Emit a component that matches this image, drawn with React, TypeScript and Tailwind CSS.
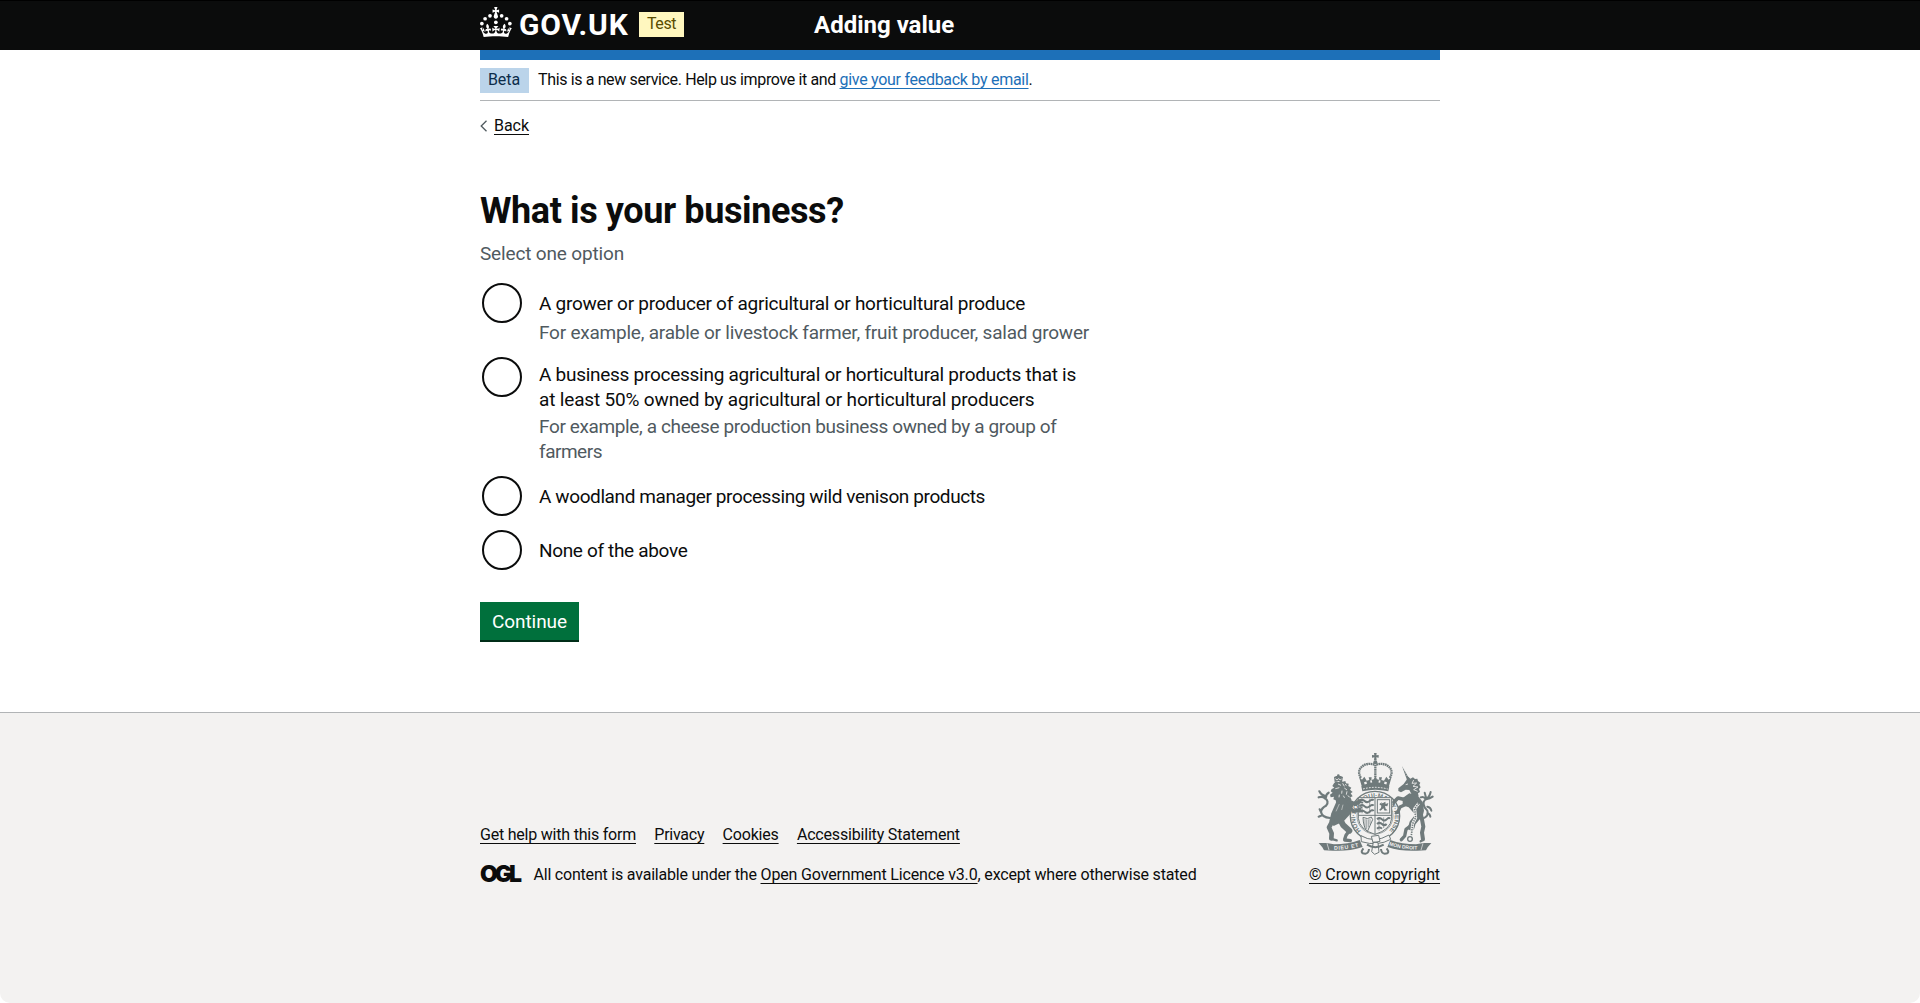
import React from "react";

const link = "underline decoration-1 underline-offset-[3px]";

function CrownMark() {
  return (
    <svg className="h-[30px] w-8 shrink-0" viewBox="0 0 64 60" fill="#fff" aria-hidden="true">
      <circle cx="20" cy="17.6" r="3.7" />
      <circle cx="10.2" cy="23.5" r="3.7" />
      <circle cx="3.7" cy="33.2" r="3.7" />
      <circle cx="31.7" cy="30.6" r="3.7" />
      <circle cx="43.3" cy="17.6" r="3.7" />
      <circle cx="53.2" cy="23.5" r="3.7" />
      <circle cx="59.7" cy="33.2" r="3.7" />
      <path d="M33.1,9.8c.2-.1.3-.3.5-.5l4.6,2.4v-6.8l-4.6,1.5c-.1-.2-.3-.3-.5-.5l1.9-5.9h-6.7l1.9,5.9c-.2.1-.3.3-.5.5l-4.6-1.5v6.8l4.6-2.4c.1.2.3.3.5.5l-2.6,8c-.9,2.8,1.2,5.7,4.1,5.7h0c3,0,5.1-2.9,4.1-5.7l-2.6-8ZM37,37.9s-3.4,3.8-4.1,6.1c2.2,0,4.2-.5,6.4-2.8l-.7,8.5c-2-2.8-4.4-4.1-5.7-3.8.1,3.1.5,6.7,5.8,7.2,3.7.3,6.7-1.5,7-3.8.4-2.6-2-4.3-3.7-1.6-1.4-4.5,2.4-6.1,4.9-3.2-1.9-4.5-1.8-7.7,2.4-10.9,3,4,2.6,7.3-1.2,11.1,2.4-1.3,6.2,0,4,4.6-1.2-2.8-3.7-2.2-4.2.2-.3,1.7.7,3.7,3,4.2,1.9.3,4.7-.9,7-5.9-1.3,0-2.4.7-3.9,1.7l2.4-8c.6,2.3,1.4,3.7,2.2,4.5.6-1.6.5-2.8,0-5.3l5,1.8c-2.6,3.6-5.2,8.7-7.3,17.5-7.4-1.1-15.7-1.7-24.5-1.7h0c-8.8,0-17.1.6-24.5,1.7-2.1-8.9-4.7-13.9-7.3-17.5l5-1.8c-.5,2.5-.6,3.7,0,5.3.8-.8,1.6-2.3,2.2-4.5l2.4,8c-1.5-1-2.6-1.7-3.9-1.7,2.3,5,5.2,6.2,7,5.9,2.3-.4,3.3-2.4,3-4.2-.5-2.4-3-3.1-4.2-.2-2.2-4.6,1.6-6,4-4.6-3.7-3.7-4.2-7.1-1.2-11.1,4.2,3.2,4.3,6.4,2.4,10.9,2.5-2.8,6.3-1.3,4.9,3.2-1.8-2.7-4.1-1-3.7,1.6.3,2.3,3.3,4.1,7,3.8,5.4-.5,5.7-4.2,5.8-7.2-1.3-.2-3.7,1-5.7,3.8l-.7-8.5c2.2,2.3,4.2,2.7,6.4,2.8-.7-2.3-4.1-6.1-4.1-6.1h10.6Z" />
    </svg>
  );
}

function RoyalArms() {
  const ink = "#6f7a7b";
  const paper = "#f3f2f1";
  return (
    <svg className="h-[112px] w-[126px]" viewBox="0 0 378 336" fill={ink} aria-hidden="true">
      {/* imperial crown */}
      <path d="M186 15h8l-1 7 7-1v8l-7-1 1 9h-8l1-9-7 1v-8l7 1z" />
      <circle cx="190" cy="43" r="6" />
      <path d="M190 50v46M187 50C160 40 128 62 147 90M193 50C220 40 252 62 233 90" fill="none" stroke={ink} strokeWidth="7" strokeDasharray="5 1.5" />
      <path d="M141 86l9 9 7-9 7 12 8-2-2-8h9l-1 8 9-3 3-10 3 10 9 3-1-8h9l-2 8 8 2 7-12 7 9 9-9-9 32q-40-10-80 0z" />
      <path d="M157 106l7-2M175 101l5-1M200 100l5 1M217 104l7 2" stroke={paper} strokeWidth="7" />
      <path d="M148 115q42-12 84 0l-3 15q-39-10-78 0z" />
      <path d="M153 123q37-10 74 0" stroke={paper} strokeWidth="3" strokeDasharray="5 4" fill="none" />
      {/* garter */}
      <circle cx="189" cy="204" r="74" fill={paper} stroke={ink} strokeWidth="4" />
      <circle cx="189" cy="204" r="54" fill="none" stroke={ink} strokeWidth="2" />
      <path id="garterArc" d="M147 249A59 59 0 1 1 231 249" fill="none" />
      <text fontSize="19" fontWeight="700" fontFamily="Liberation Sans, sans-serif">
        <textPath href="#garterArc">HONI·SOIT·QUI·MAL·Y·PENSE</textPath>
      </text>
      {/* quartered shield */}
      <path d="M139 149h100v62q-3 34-50 48q-47-14-50-48z" fill={paper} stroke={ink} strokeWidth="3" />
      <path d="M189 149v110M139 202h100" stroke={ink} strokeWidth="3" />
      <path d="M143 159q8-7 15 0t15 0t12-2M143 175q8-7 15 0t15 0t12-2M143 191q8-7 15 0t15 0t12-2M195 214q8-7 15 0t14 0t10-2M195 228q8-7 15 0t14 0M195 242q8-7 15 0" fill="none" stroke={ink} strokeWidth="6" />
      <path d="M143 155v40M150 152v44M173 152v44M201 208v40M215 208v32" stroke={ink} strokeWidth="2" />
      <rect x="196" y="155" width="37" height="40" fill="none" stroke={ink} strokeWidth="3" />
      <path d="M206 162l6 4 8-5 1 7 8-3-3 10-7-1 2 8 6 5-9 1-4-7-8 7-5-2 6-6 1-7-6-4 3-4 5 2z" />
      <path d="M153 208q14 8 25-1l4 8-16 36q-12-13-13-43z" fill="none" stroke={ink} strokeWidth="3" />
      <path d="M159 213v25M164 214v29M169 214v24M174 212v18" stroke={ink} strokeWidth="2" />
      {/* lion */}
      <path d="M66 87q14-8 27 0l-3 14q-11-4-22 1z" />
      <path d="M70 92l5 4 5-4 5 4 4-4" fill="none" stroke={paper} strokeWidth="2.5" />
      <circle cx="79" cy="83" r="4" />
      <path d="M66 106l6-6 9 2 5-5 6 4 8-2 2 7 8 1-1 7 9 5-4 6 8 7-6 4 6 9-7 3 4 9-8 1 2 8-9-1-3 8-8-5-8 4-4-8-8 1-2-8-7-3 2-8 -10 2-2-8 8-6-6-4 3-7 8-4-6-5z" />
      <path d="M78 108l9 4M70 122l12-3M92 106l5 9M97 120l8 6M90 128l-1 9M105 130l-2 10M94 143l5 9M82 140l-1 8M107 143l6 4M100 108l3 5" stroke={paper} strokeWidth="2.5" />
      <path d="M77 152l32-4 14 22-8 28-20 22-30 14-13-14 6-24z" />
      <g fill="none" stroke={ink} strokeLinejoin="round" strokeLinecap="round">
        <path d="M110 160l18 8 14-7" strokeWidth="12" />
        <path d="M108 176l18 14 16-4" strokeWidth="11" />
        <path d="M139 157l10-3M142 162l10 2M140 184l9-6M141 189l10 2" strokeWidth="4" />
        <path d="M62 218l-11 20 8 18-1 15" strokeWidth="14" />
        <path d="M56 272l18 5" strokeWidth="7" />
        <path d="M82 210l12 22 18 16" strokeWidth="18" />
        <path d="M112 248l-10 14-4 12M98 276l17 2" strokeWidth="10" />
        {/* lion tail */}
        <path d="M54 210Q30 208 27 192Q28 180 42 173Q54 160 36 148M22 130q6 12 18 14M50 134q-8 4-8 14M20 148q12-4 20 4M27 192l-4-8M30 202l-10 4" strokeWidth="6.5" />
      </g>
      <path d="M82 168l-10 22M93 170l-4 16" stroke={paper} strokeWidth="1.5" />
      {/* unicorn */}
      <path d="M270 54l22 38-7 4z" />
      <path d="M272 62l5-3M276 69l5-3M280 76l5-3M283 83l5-3" stroke={paper} strokeWidth="1.5" />
      <path d="M285 94l4-8 6 6 8-4 6 5 7-1 2 7 7 5-3 6 4 8-5 5 3 9-6 4 2 9-8 3-12-6-8-16-11-1-14 8-8-4 0-8 16-13z" />
      <path d="M305 96l-5 10 14-1-11 10 15 2-13 8 12 5M281 110l7-2" fill="none" stroke={paper} strokeWidth="2.5" />
      <path d="M272 150l20-14 26 8 14 18 4 26-6 24-18 4-6-20-16-18-18-6z" />
      <g fill="none" stroke={ink} strokeLinejoin="round" strokeLinecap="round">
        <path d="M284 156l-26-6-12 12" strokeWidth="11" />
        <path d="M246 162l-2 8" strokeWidth="6" />
        <path d="M284 168l-20 9-7 16" strokeWidth="10" />
        <path d="M257 193l-6 3" strokeWidth="7" />
        <path d="M322 200l-20 24-4 14" strokeWidth="19" />
        <path d="M298 232l-16 12-4 20-10 11" strokeWidth="10" />
        <path d="M328 204l6 32-4 18 3 20" strokeWidth="12" />
        <path d="M333 276l-7 4" strokeWidth="7" />
        {/* unicorn tail */}
        <path d="M332 212Q352 204 346 188Q326 168 340 154Q352 150 356 132M326 148q10-4 16 6M362 146q-8 6-20 8M346 176q10 2 12 12M346 196q8 2 9 10M338 134q2 10 6 18" strokeWidth="6" />
      </g>
      <path d="M320 166l-12 16 3 27-9 18-4 36" fill="none" stroke={paper} strokeWidth="9" />
      <path d="M320 166l-12 16 3 27-9 18-4 36" fill="none" stroke={ink} strokeWidth="5" strokeDasharray="4 3" />
      <circle cx="294" cy="273" r="7" fill={paper} stroke={ink} strokeWidth="4" />
      {/* motto scroll */}
      <path d="M20 285h24l22 4q42 0 77-13l9 21q-44 14-90 11l-26-1-5-9zM358 285h-24l-22 4q-42 0-77-13l-9 21q44 14 90 11l26-1 5-9z" />
      <path d="M45 286l6 20M333 286l-6 20" stroke={paper} strokeWidth="2" />
      <path id="mottoLeft" d="M66 305q38 1 84-12" fill="none" />
      <path id="mottoRight" d="M231 292q40 13 90 13" fill="none" />
      <g fill={paper} fontFamily="Liberation Sans, sans-serif" fontSize="16" fontWeight="700">
        <text letterSpacing="2"><textPath href="#mottoLeft">DIEU ET</textPath></text>
        <text fontSize="15"><textPath href="#mottoRight">MON DROIT</textPath></text>
      </g>
      {/* garter buckle and compartment */}
      <path d="M147 263q40 24 84-2l5 13q-38 22-88 7z" fill={paper} stroke={ink} strokeWidth="3" />
      <path d="M178 265l22-3 4 18-21 4zM184 282l14 2 3 29-13 6-9-8z" fill={paper} stroke={ink} strokeWidth="3" />
      <path d="M154 301q-12 16 6 16q10-1 11-14M224 301q12 16-6 16q-10-1-11-14M165 290q25 15 50 0" fill="none" stroke={ink} strokeWidth="6" />
    </svg>
  );
}

type Line = { text: string; cls: string };
type Option = { lines: Line[]; hint?: Line[]; box: string; pad: string };

const options: Option[] = [
  {
    box: "h-[74px]",
    pad: "pt-2",
    lines: [{ text: "A grower or producer of agricultural or horticultural produce", cls: "tracking-[-0.256px]" }],
    hint: [{ text: "For example, arable or livestock farmer, fruit producer, salad grower", cls: "tracking-[-0.225px]" }],
  },
  {
    box: "h-[119px]",
    pad: "pt-[5px]",
    lines: [
      { text: "A business processing agricultural or horticultural products that is", cls: "tracking-[-0.272px]" },
      { text: "at least 50% owned by agricultural or horticultural producers", cls: "tracking-[-0.166px]" },
    ],
    hint: [
      { text: "For example, a cheese production business owned by a group of", cls: "tracking-[-0.377px]" },
      { text: "farmers", cls: "tracking-[-0.48px]" },
    ],
  },
  {
    box: "h-[54px]",
    pad: "pt-2",
    lines: [{ text: "A woodland manager processing wild venison products", cls: "tracking-[-0.397px]" }],
  },
  {
    box: "h-[40px]",
    pad: "pt-2",
    lines: [{ text: "None of the above", cls: "tracking-[-0.34px]" }],
  },
];

export default function App() {
  return (
    <div className="flex h-[1003px] flex-col overflow-hidden bg-white font-['Roboto',sans-serif] text-base leading-5 text-[#0b0c0c]">
      <header className="h-[50px] shrink-0 border-t border-black bg-[#0b0c0c] text-white">
        <div className="mx-auto flex w-[960px] items-start">
          <div className="flex w-[334px] items-start">
            <div className="mt-1.5">
              <CrownMark />
            </div>
            <span className="mt-1.5 ml-[7px] w-[120px] text-[30px] leading-9 font-bold tracking-[0.8px]">GOV.UK</span>
            <strong className="mt-[11px] h-[25px] w-[45px] bg-[#fff7bf] pt-0.5 pl-2 font-normal tracking-[-0.438px] text-[#594d00]">
              Test
            </strong>
          </div>
          <span className="mt-[9px] text-2xl leading-[30px] font-bold">Adding value</span>
        </div>
      </header>

      <div className="mx-auto w-[960px] shrink-0">
        <div className="h-[10px] bg-[#1d70b8]" />
        <div className="flex h-[41px] items-start border-b border-[#b1b4b6] pt-2">
          <strong className="mr-[9px] h-[25px] w-[49px] bg-[#bbd4ea] pt-0.5 pl-2 font-normal tracking-[-0.098px] text-[#0c2d4a]">
            Beta
          </strong>
          <p className="pt-0.5 tracking-[-0.364px]">
            This is a new service. Help us improve it and{" "}
            <a href="#" className={`${link} tracking-[-0.286px] text-[#1d70b8]`}>give your feedback by email</a>.
          </p>
        </div>
        <div className="flex h-[90px] pt-[15px]">
          <svg className="mt-1 mr-[7px] h-3 w-[7px]" viewBox="0 0 7 12" fill="none" stroke="#505a5f" strokeWidth="1.3">
            <path d="M6.5 .7L1.2 6l5.3 5.3" />
          </svg>
          <a href="#" className={`${link} tracking-[-0.039px]`}>Back</a>
        </div>

        <main className="h-[521px]">
          <h1 className="text-4xl leading-10 font-bold tracking-[-0.4px]">What is your business?</h1>
          <p className="mt-[10px] text-[19px] leading-[25px] tracking-[-0.16px] text-[#505a5f]">Select one option</p>
          <div className="mt-[17px] text-[19px] leading-[25px]">
            {options.map((o) => (
              <label key={o.lines[0].text} className={`${o.box} flex items-start pl-0.5`}>
                <span className="size-10 shrink-0 rounded-full border-2 border-[#0b0c0c] bg-white" />
                <span className={`${o.pad} ml-[17px]`}>
                  {o.lines.map((l) => (
                    <span key={l.text} className={`${l.cls} block whitespace-nowrap`}>{l.text}</span>
                  ))}
                  {o.hint && (
                    <span className={o.lines.length > 1 ? "mt-0.5 block text-[#505a5f]" : "mt-1 block text-[#505a5f]"}>
                      {o.hint.map((l) => (
                        <span key={l.text} className={`${l.cls} block whitespace-nowrap`}>{l.text}</span>
                      ))}
                    </span>
                  )}
                </span>
              </label>
            ))}
          </div>
          <button className="mt-8 block h-[38px] w-[99px] bg-[#00703c] text-[19px] leading-[25px] tracking-[-0.072px] text-white shadow-[0_2px_0_#002d18]">
            Continue
          </button>
        </main>
      </div>

      <footer className="grow rounded-b-[10px] border-t border-[#b1b4b6] bg-[#f3f2f1]">
        <div className="mx-auto flex w-[960px] justify-between pt-[35px]">
          <div className="pt-[77px]">
            <div className="flex gap-[18.3px]">
              <a href="#" className={`${link} tracking-[-0.216px]`}>Get help with this form</a>
              <a href="#" className={`${link} tracking-[-0.241px]`}>Privacy</a>
              <a href="#" className={`${link} tracking-[-0.201px]`}>Cookies</a>
              <a href="#" className={`${link} tracking-[-0.185px]`}>Accessibility Statement</a>
            </div>
            <div className="mt-5 flex">
              <span className="mt-px w-[53.5px] font-['Inter',sans-serif] text-[23px] leading-[17px] font-black tracking-[-3.1px]">OGL</span>
              <p className="tracking-[-0.205px]">
                All content is available under the{" "}
                <a href="#" className={`${link} tracking-[-0.147px]`}>Open Government Licence v3.0</a>
                <span className="tracking-[-0.169px]">, except where otherwise stated</span>
              </p>
            </div>
          </div>
          <div className="flex w-[131px] flex-col items-center">
            <RoyalArms />
            <a href="#" className={`${link} mt-[5px] whitespace-nowrap tracking-[-0.087px]`}>© Crown copyright</a>
          </div>
        </div>
      </footer>
    </div>
  );
}
